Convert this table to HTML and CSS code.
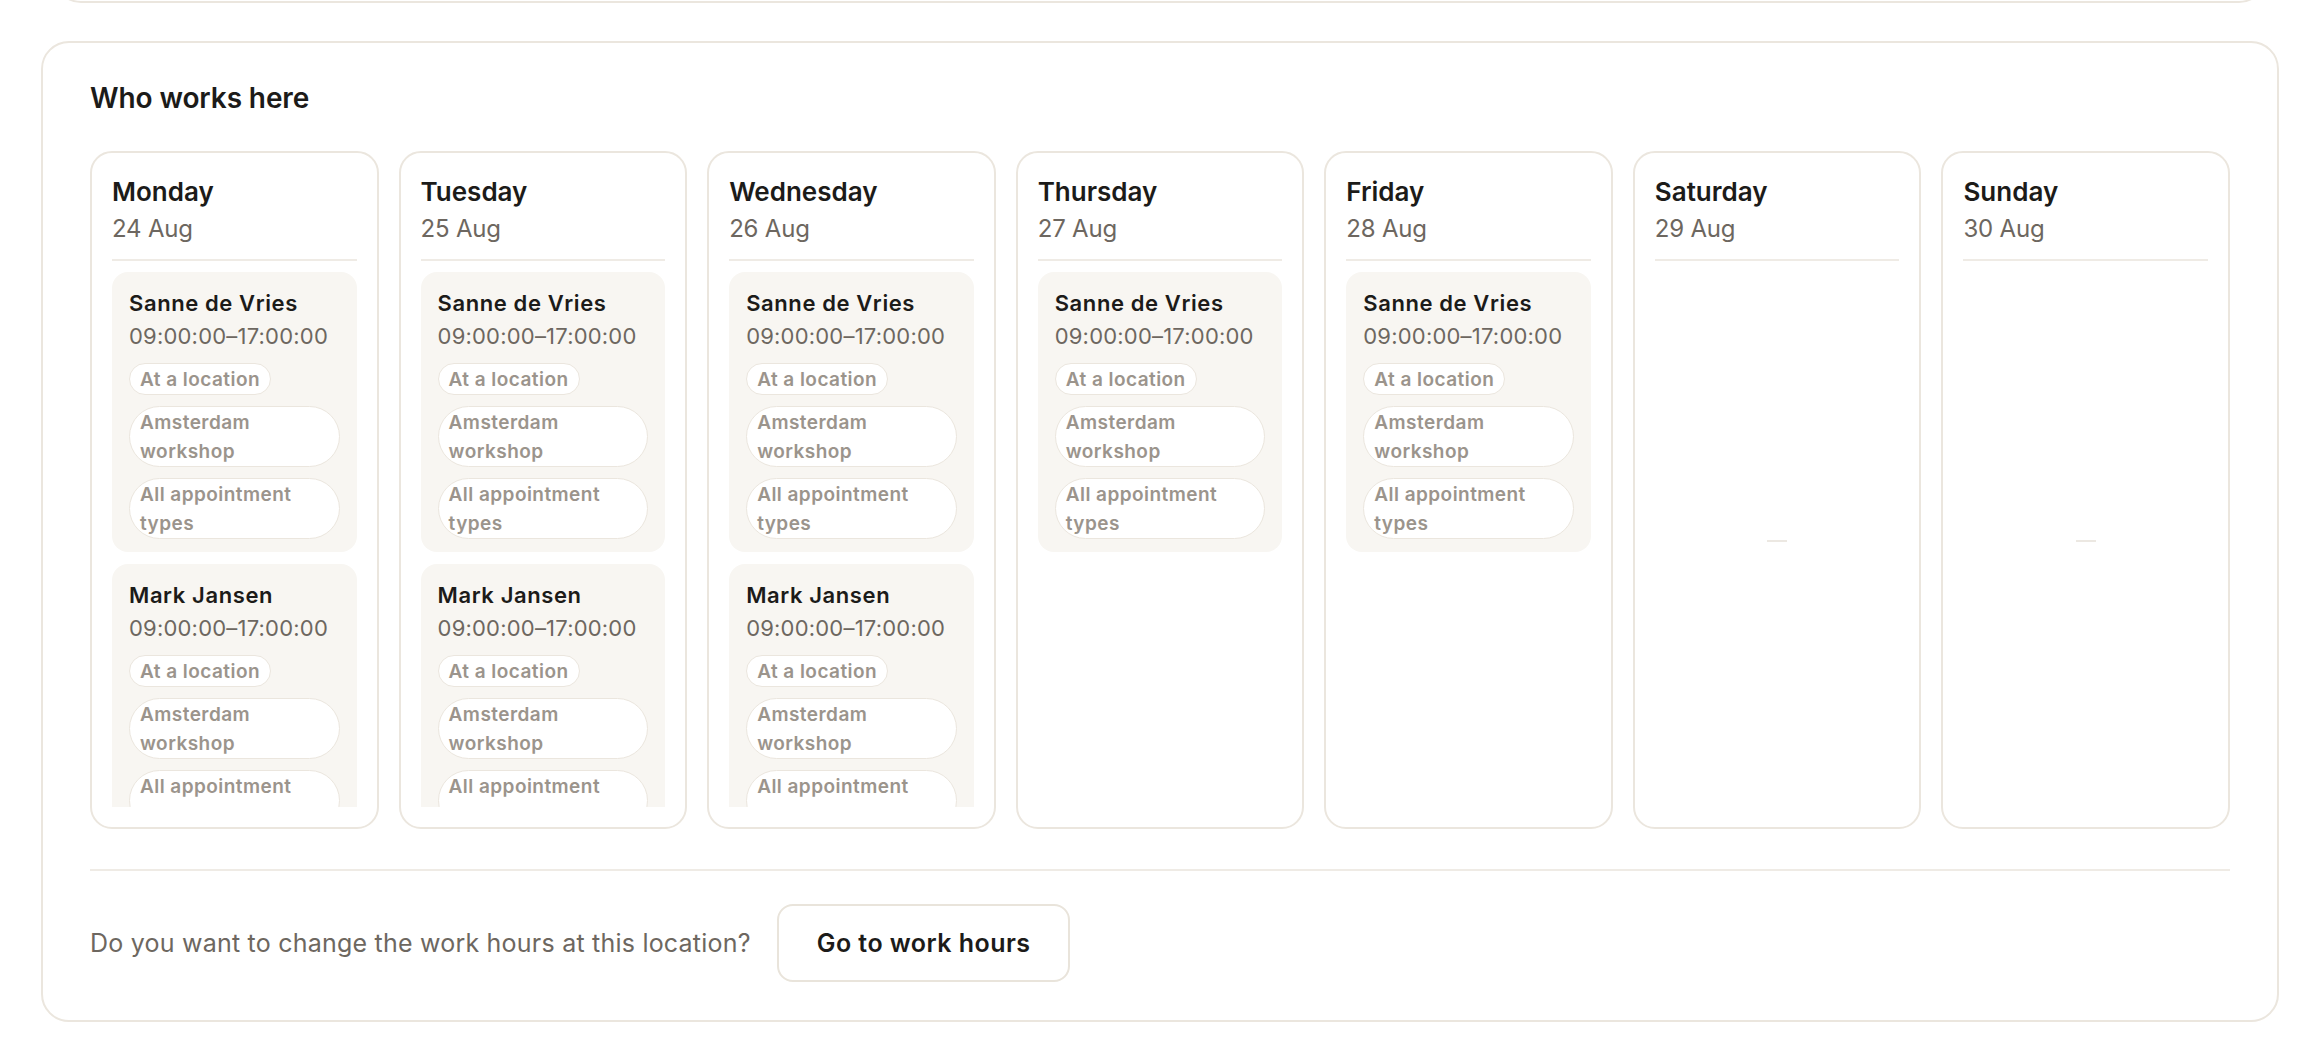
FILE: index.html
```html
<!DOCTYPE html>
<html lang="en">
<head>
<meta charset="utf-8">
<title>Who works here</title>
<link rel="stylesheet" href="styles.css">
</head>
<body>
<div class="page">
  <div class="prev-card"></div>
  <section class="panel">
    <h2 class="panel-title">Who works here</h2>
    <div class="week">
      <div class="day">
        <div class="day-head"><div class="day-name">Monday</div><div class="day-date">24 Aug</div></div>
        <div class="day-list">
          <div class="shift">
            <div class="shift-name">Sanne de Vries</div>
            <div class="shift-time">09:00:00–17:00:00</div>
            <div class="chips"><span class="chip">At a location</span><span class="chip">Amsterdam workshop</span><span class="chip">All appointment types</span></div>
          </div>
          <div class="shift">
            <div class="shift-name">Mark Jansen</div>
            <div class="shift-time">09:00:00–17:00:00</div>
            <div class="chips"><span class="chip">At a location</span><span class="chip">Amsterdam workshop</span><span class="chip">All appointment types</span></div>
          </div>
        </div>
      </div>
      <div class="day">
        <div class="day-head"><div class="day-name">Tuesday</div><div class="day-date">25 Aug</div></div>
        <div class="day-list">
          <div class="shift">
            <div class="shift-name">Sanne de Vries</div>
            <div class="shift-time">09:00:00–17:00:00</div>
            <div class="chips"><span class="chip">At a location</span><span class="chip">Amsterdam workshop</span><span class="chip">All appointment types</span></div>
          </div>
          <div class="shift">
            <div class="shift-name">Mark Jansen</div>
            <div class="shift-time">09:00:00–17:00:00</div>
            <div class="chips"><span class="chip">At a location</span><span class="chip">Amsterdam workshop</span><span class="chip">All appointment types</span></div>
          </div>
        </div>
      </div>
      <div class="day">
        <div class="day-head"><div class="day-name">Wednesday</div><div class="day-date">26 Aug</div></div>
        <div class="day-list">
          <div class="shift">
            <div class="shift-name">Sanne de Vries</div>
            <div class="shift-time">09:00:00–17:00:00</div>
            <div class="chips"><span class="chip">At a location</span><span class="chip">Amsterdam workshop</span><span class="chip">All appointment types</span></div>
          </div>
          <div class="shift">
            <div class="shift-name">Mark Jansen</div>
            <div class="shift-time">09:00:00–17:00:00</div>
            <div class="chips"><span class="chip">At a location</span><span class="chip">Amsterdam workshop</span><span class="chip">All appointment types</span></div>
          </div>
        </div>
      </div>
      <div class="day">
        <div class="day-head"><div class="day-name">Thursday</div><div class="day-date">27 Aug</div></div>
        <div class="day-list">
          <div class="shift">
            <div class="shift-name">Sanne de Vries</div>
            <div class="shift-time">09:00:00–17:00:00</div>
            <div class="chips"><span class="chip">At a location</span><span class="chip">Amsterdam workshop</span><span class="chip">All appointment types</span></div>
          </div>
        </div>
      </div>
      <div class="day">
        <div class="day-head"><div class="day-name">Friday</div><div class="day-date">28 Aug</div></div>
        <div class="day-list">
          <div class="shift">
            <div class="shift-name">Sanne de Vries</div>
            <div class="shift-time">09:00:00–17:00:00</div>
            <div class="chips"><span class="chip">At a location</span><span class="chip">Amsterdam workshop</span><span class="chip">All appointment types</span></div>
          </div>
        </div>
      </div>
      <div class="day">
        <div class="day-head"><div class="day-name">Saturday</div><div class="day-date">29 Aug</div></div>
        <div class="day-list day-empty"><span class="dash"></span></div>
      </div>
      <div class="day">
        <div class="day-head"><div class="day-name">Sunday</div><div class="day-date">30 Aug</div></div>
        <div class="day-list day-empty"><span class="dash"></span></div>
      </div>
    </div>
    <div class="panel-foot">
      <p class="foot-text">Do you want to change the work hours at this location?</p>
      <button class="btn" type="button">Go to work hours</button>
    </div>
  </section>
</div>
</body>
</html>
```

FILE: styles.css
```css
* { box-sizing: border-box; }

html, body {
  margin: 0;
  padding: 0;
  background: #ffffff;
}

body {
  font-family: Inter, "Liberation Sans", sans-serif;
  color: #1c1b19;
  overflow: hidden;
}

.page {
  padding: 0 41px;
}

.prev-card {
  height: 100px;
  margin: -97px 12px 0;
  border: 2px solid #ebe6de;
  border-radius: 28px;
}

.panel {
  margin-top: 38px;
  border: 2px solid #ebe6de;
  border-radius: 28px;
  padding: 39px 47px 38px;
  display: flex;
  flex-direction: column;
}

.panel-title {
  margin: 0 0 37px;
  font-size: 28px;
  line-height: 32px;
  font-weight: 600;
  letter-spacing: -0.1px;
}

.week {
  display: grid;
  grid-template-columns: repeat(7, 1fr);
  gap: 20px;
}

.day {
  height: 678px;
  border: 2px solid #ebe6de;
  border-radius: 22px;
  padding: 20px;
  display: flex;
  flex-direction: column;
  min-width: 0;
}

.day-head {
  padding-bottom: 12px;
  border-bottom: 2px solid #efebe5;
}

.day-name {
  font-size: 26px;
  line-height: 38px;
  font-weight: 600;
}

.day-date {
  font-size: 24px;
  line-height: 36px;
  color: #6d6760;
  letter-spacing: -0.2px;
}

.day-list {
  flex: 1;
  margin-top: 11px;
  overflow: hidden;
  display: flex;
  flex-direction: column;
  gap: 12px;
}

.day-empty {
  align-items: center;
  justify-content: center;
  padding-top: 2px;
}

.dash {
  display: block;
  width: 20px;
  height: 2px;
  background: #ece8e2;
}

.shift {
  flex: none;
  background: #f8f6f2;
  border-radius: 16px;
  padding: 16px 17px 13px;
}

.shift-name {
  font-size: 22px;
  line-height: 30px;
  font-weight: 600;
  letter-spacing: 0.6px;
}

.shift-time {
  margin-top: 3px;
  font-size: 22px;
  line-height: 30px;
  color: #6d6760;
  letter-spacing: 0.2px;
}

.chips {
  margin-top: 12px;
  display: flex;
  flex-direction: column;
  align-items: flex-start;
  gap: 11px;
}

.chip {
  display: block;
  max-width: 100%;
  background: #ffffff;
  border: 1px solid #ebe6de;
  border-radius: 999px;
  padding: 1px 10px 0;
  font-size: 19px;
  line-height: 29px;
  font-weight: 600;
  letter-spacing: 0.45px;
  color: #9b948c;
}

.panel-foot {
  margin-top: 40px;
  border-top: 2px solid #efebe5;
  padding-top: 33px;
  display: flex;
  align-items: center;
  gap: 26px;
}

.foot-text {
  margin: 0;
  font-size: 25px;
  line-height: 34px;
  color: #6d6760;
  letter-spacing: 0.22px;
}

.btn {
  height: 78px;
  padding: 0 38px;
  border: 2px solid #e9e4db;
  border-radius: 16px;
  background: #ffffff;
  font-family: inherit;
  font-size: 25px;
  font-weight: 600;
  letter-spacing: 0.45px;
  color: #1c1b19;
}
```
